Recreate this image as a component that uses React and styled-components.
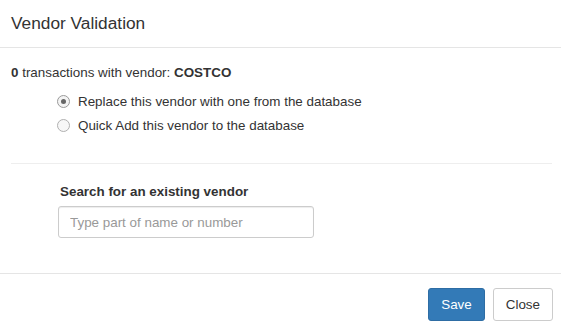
import React from "react";
import styled, { createGlobalStyle } from "styled-components";

const Global = createGlobalStyle`
  html, body { margin: 0; padding: 0; background: #fff; }
  body {
    font-family: "Liberation Sans", Arial, Helvetica, sans-serif;
    font-size: 13.4px;
    color: #333;
  }
  * { box-sizing: border-box; }
`;

const Modal = styled.div`
  width: 561px;
  height: 331px;
  background: #fff;
  display: flex;
  flex-direction: column;
`;

const Header = styled.div`
  padding: 11px 11px;
  border-bottom: 1px solid #e5e5e5;
`;

const Title = styled.h4`
  margin: 0;
  font-size: 17.3px;
  line-height: 25px;
  font-weight: normal;
  color: #333;
`;

const Body = styled.div`
  padding: 15px 9px 0 11px;
  flex: 1;
`;

const Summary = styled.p`
  margin: 0;
  line-height: 19px;
`;

const RadioList = styled.div`
  display: flex;
  flex-direction: column;
  gap: 5px;
  margin-top: 10px;
  padding-left: 46px;
`;

const RadioRow = styled.label`
  display: flex;
  align-items: center;
  gap: 8px;
  line-height: 19px;
`;

const RadioCircle = styled.span`
  width: 13px;
  height: 13px;
  border-radius: 50%;
  border: 1px solid ${(p) => (p.$checked ? "#9a9a9a" : "#b0b0b0")};
  background: ${(p) => (p.$checked ? "#f3f3f3" : "#f7f7f7")};
  display: flex;
  align-items: center;
  justify-content: center;
  &::after {
    content: "";
    width: 5px;
    height: 5px;
    border-radius: 50%;
    background: ${(p) => (p.$checked ? "#666" : "transparent")};
  }
`;

const Divider = styled.hr`
  margin: 28px 0 0;
  border: 0;
  border-top: 1px solid #eee;
`;

const SearchGroup = styled.div`
  padding: 18px 0 0 47px;
  display: flex;
  flex-direction: column;
  gap: 5px;
`;

const FieldLabel = styled.label`
  font-weight: bold;
  margin-left: 2px;
  line-height: 19px;
`;

const Input = styled.input`
  width: 256px;
  height: 32px;
  padding: 6px 11px;
  border: 1px solid #ccc;
  border-radius: 3px;
  box-shadow: inset 0 1px 1px rgba(0, 0, 0, 0.075);
  font-family: inherit;
  font-size: 13.4px;
  color: #555;
  &::placeholder { color: #999; }
`;

const Footer = styled.div`
  border-top: 1px solid #e5e5e5;
  padding: 14px 8px 10px;
  display: flex;
  justify-content: flex-end;
  gap: 8px;
`;

const Button = styled.button`
  height: 33px;
  padding: 0 12px;
  font-family: inherit;
  font-size: 13.4px;
  border-radius: 3px;
  border: 1px solid ${(p) => (p.$primary ? "#2e6da4" : "#ccc")};
  background: ${(p) => (p.$primary ? "#337ab7" : "#fff")};
  color: ${(p) => (p.$primary ? "#fff" : "#333")};
`;

export default function App() {
  return (
    <>
      <Global />
      <Modal>
        <Header>
          <Title>Vendor Validation</Title>
        </Header>
        <Body>
          <Summary>
            <b>0</b> transactions with vendor: <b>COSTCO</b>
          </Summary>
          <RadioList>
            <RadioRow>
              <RadioCircle $checked />
              Replace this vendor with one from the database
            </RadioRow>
            <RadioRow>
              <RadioCircle />
              Quick Add this vendor to the database
            </RadioRow>
          </RadioList>
          <Divider />
          <SearchGroup>
            <FieldLabel>Search for an existing vendor</FieldLabel>
            <Input placeholder="Type part of name or number" />
          </SearchGroup>
        </Body>
        <Footer>
          <Button $primary>Save</Button>
          <Button>Close</Button>
        </Footer>
      </Modal>
    </>
  );
}
